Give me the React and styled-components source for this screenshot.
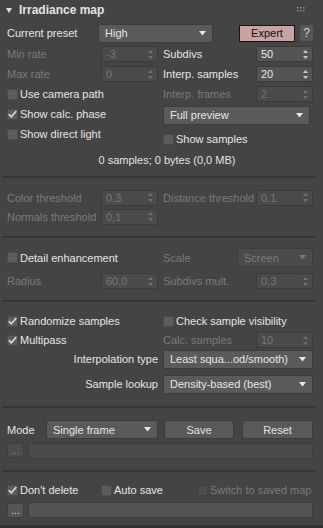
import React from 'react'
import styled, { createGlobalStyle } from 'styled-components'

const Global = createGlobalStyle`
body {
  margin: 0;
  background: #444444;
  font-family: "Liberation Sans", Arial, sans-serif;
  font-size: 11px;
  color: #e2e2e2;
}
`
const Panel = styled.div`
width: 323px;
height: 528px;
background: #444444;
box-sizing: border-box;
border-bottom: 3px solid #333333;
overflow: hidden;
`
const Header = styled.div`
display: flex;
align-items: center;
height: 20px;
padding: 0 18px 0 6px;
gap: 7px;
`
const Title = styled.div`
font-weight: bold;
font-size: 12px;
flex: 1;
`
const Section = styled.div`
padding: ${p => p.pt}px 3px ${p => p.pb}px 5px;
border-bottom: ${p => (p.last ? 'none' : '2px solid #363636')};
margin: 0 7px 0 2px;
`
const Row = styled.div`
display: flex;
align-items: center;
height: ${p => p.h || 20}px;
gap: ${p => p.gap || 0}px;
`
const Cols = styled.div`
display: grid;
grid-template-columns: 151px 150px;
column-gap: 5px;
`
const Col = styled.div`
display: flex;
flex-direction: column;
`
const Half = styled.div`
display: flex;
align-items: center;
justify-content: space-between;
height: ${p => p.h || 20}px;
`
const Label = styled.span`
color: ${p => (p.off ? '#7a7a7a' : '#e4e4e4')};
white-space: nowrap;
text-align: ${p => p.align || 'left'};
flex: ${p => (p.grow ? 1 : 'none')};
width: ${p => (p.w ? p.w + 'px' : 'auto')};
padding-right: ${p => p.pr || 0}px;
`
const Gap = styled.span`
width: ${p => p.w}px;
flex: none;
`
const SpinBox = styled.div`
width: 57px;
height: 16px;
flex: none;
box-sizing: border-box;
border: 1px solid #3b3b3b;
border-radius: 2px;
background: ${p => (p.off ? '#4a4a4a' : '#545454')};
color: ${p => (p.off ? '#767676' : '#e8e8e8')};
display: flex;
align-items: center;
padding: 0 4px;
justify-content: space-between;
`
const Drop = styled.div`
width: ${p => p.w}px;
height: 19px;
flex: none;
box-sizing: border-box;
border: 1px solid #3c3c3c;
border-radius: 2px;
background: ${p => (p.off ? '#4b4b4b' : '#5a5a5a')};
color: ${p => (p.off ? '#7a7a7a' : '#e6e6e6')};
display: flex;
align-items: center;
justify-content: space-between;
padding: 0 6px;
white-space: nowrap;
`
const Box = styled.span`
width: 11px;
height: 11px;
box-sizing: border-box;
background: ${p => (p.off ? '#4c4c4c' : '#5c5c5c')};
border: 1px solid ${p => (p.off ? '#404040' : '#4a4a4a')};
margin-right: 2px;
display: inline-flex;
align-items: center;
justify-content: center;
flex: none;
`
const Check = styled.label`
display: flex;
align-items: center;
color: ${p => (p.off ? '#7a7a7a' : '#e4e4e4')};
white-space: nowrap;
width: ${p => (p.w ? p.w + 'px' : 'auto')};
`
const Expert = styled.div`
width: 56px;
height: 17px;
box-sizing: border-box;
background: #c9a2a2;
border: 1px solid #151515;
color: #111;
display: flex;
align-items: center;
justify-content: center;
`
const Help = styled.div`
width: 13px;
height: 16px;
flex: none;
border-radius: 2px;
background: #575757;
color: #cfcfcf;
font-size: 12px;
display: flex;
align-items: center;
justify-content: center;
`
const Btn = styled.div`
width: ${p => p.w}px;
height: 19px;
flex: none;
box-sizing: border-box;
border: 1px solid #3c3c3c;
border-radius: 3px;
background: #595959;
display: flex;
align-items: center;
justify-content: center;
`
const Dots = styled.div`
width: 17px;
height: 15px;
box-sizing: border-box;
border: 1px solid #3e3e3e;
border-radius: 3px;
background: ${p => (p.off ? '#4c4c4c' : '#565656')};
color: ${p => (p.off ? '#888' : '#dcdcdc')};
display: flex;
align-items: flex-end;
justify-content: center;
font-size: 10px;
line-height: 12px;
flex: none;
`
const Field = styled.div`
flex: 1;
height: 16px;
box-sizing: border-box;
border: 1px solid #3d3d3d;
border-radius: 2px;
background: ${p => (p.off ? '#4b4b4b' : '#545454')};
`
const Stats = styled.div`
text-align: center;
height: 16px;
line-height: 16px;
padding-left: 14px;
`

const Arrow = ({ off }) => (
  <svg width="7" height="5" viewBox="0 0 7 5">
    <path d="M0 0 H7 L3.5 4.5 Z" fill={off ? '#7a7a7a' : '#e8e8e8'} />
  </svg>
)

const Updown = ({ off }) => (
  <svg width="5" height="9" viewBox="0 0 5 9">
    <path d="M2.5 0 L5 3 H0 Z M0 6 H5 L2.5 9 Z" fill={off ? '#707070' : '#c8c8c8'} />
  </svg>
)

const Tick = () => (
  <svg width="9" height="8" viewBox="0 0 9 8">
    <path d="M0.8 4.2 L3.3 6.8 L8.3 1" stroke="#d6d6d6" strokeWidth="1.7" fill="none" />
  </svg>
)

const Spinner = ({ value, off }) => (
  <SpinBox off={off}>
    <span>{value}</span>
    <Updown off={off} />
  </SpinBox>
)

const Dropdown = ({ w, children, off }) => (
  <Drop w={w} off={off}>
    <span>{children}</span>
    <Arrow off={off} />
  </Drop>
)

const CheckBox = ({ on, off, w, children }) => (
  <Check off={off} w={w}>
    <Box off={off}>{on && <Tick />}</Box>
    {children}
  </Check>
)

const Grip = () => (
  <svg width="8" height="6" viewBox="0 0 8 6">
    {[0, 3, 6].map(x => [0, 3].map(y => <rect key={x + '-' + y} x={x} y={y} width="1.5" height="1.5" fill="#8a8a8a" />))}
  </svg>
)

const LabelSpin = ({ label, value, off, h }) => (
  <Half h={h}>
    <Label off={off}>{label}</Label>
    <Spinner value={value} off={off} />
  </Half>
)

export default function App() {
  return (
    <Panel>
      <Global />
      <Header>
        <svg width="6" height="5" viewBox="0 0 6 5"><path d="M0 0 H6 L3 5 Z" fill="#dedede" /></svg>
        <Title>Irradiance map</Title>
        <Grip />
      </Header>

      <Section pt={2} pb={8}>
        <Row h={22}>
          <Label w={91}>Current preset</Label>
          <Dropdown w={115}>High</Dropdown>
          <Gap w={26} />
          <Expert>Expert</Expert>
          <Gap w={5} />
          <Help>?</Help>
        </Row>
        <Cols>
          <Col>
            <LabelSpin label="Min rate" value="-3" off />
            <LabelSpin label="Max rate" value="0" off />
            <Half><CheckBox>Use camera path</CheckBox></Half>
          </Col>
          <Col>
            <LabelSpin label="Subdivs" value="50" />
            <LabelSpin label="Interp. samples" value="20" />
            <LabelSpin label="Interp. frames" value="2" off />
          </Col>
        </Cols>
        <Cols>
          <Col>
            <Half><CheckBox on>Show calc. phase</CheckBox></Half>
            <Half><CheckBox>Show direct light</CheckBox></Half>
          </Col>
          <Col>
            <Half h={22}><Dropdown w={147}>Full preview</Dropdown></Half>
            <Half h={26}><CheckBox>Show samples</CheckBox></Half>
          </Col>
        </Cols>
        <Stats>0 samples; 0 bytes (0,0 MB)</Stats>
      </Section>

      <Section pt={10} pb={10}>
        <Cols>
          <Col>
            <LabelSpin label="Color threshold" value="0,3" off h={19} />
            <LabelSpin label="Normals threshold" value="0,1" off h={19} />
          </Col>
          <Col>
            <LabelSpin label="Distance threshold" value="0,1" off h={19} />
          </Col>
        </Cols>
      </Section>

      <Section pt={9} pb={6}>
        <Cols>
          <Col>
            <Half h={21}><CheckBox>Detail enhancement</CheckBox></Half>
            <LabelSpin label="Radius" value="60,0" off h={26} />
          </Col>
          <Col>
            <Half h={21}>
              <Label off>Scale</Label>
              <Dropdown w={76} off>Screen</Dropdown>
            </Half>
            <LabelSpin label="Subdivs mult." value="0,3" off h={26} />
          </Col>
        </Cols>
      </Section>

      <Section pt={9} pb={7}>
        <Cols>
          <Col>
            <Half><CheckBox on>Randomize samples</CheckBox></Half>
            <Half h={18}><CheckBox on>Multipass</CheckBox></Half>
          </Col>
          <Col>
            <Half><CheckBox>Check sample visibility</CheckBox></Half>
            <LabelSpin label="Calc. samples" value="10" off h={18} />
          </Col>
        </Cols>
        <Row h={20}>
          <Label grow align="right" pr={5}>Interpolation type</Label>
          <Dropdown w={150}>Least squa...od/smooth)</Dropdown>
        </Row>
        <Row h={30}>
          <Label grow align="right" pr={5}>Sample lookup</Label>
          <Dropdown w={150}>Density-based (best)</Dropdown>
        </Row>
      </Section>

      <Section pt={11} pb={9}>
        <Row h={21}>
          <Label w={39}>Mode</Label>
          <Dropdown w={112}>Single frame</Dropdown>
          <Gap w={6} />
          <Btn w={70}>Save</Btn>
          <Gap w={8} />
          <Btn w={71}>Reset</Btn>
        </Row>
        <Row h={21} gap={4}>
          <Dots off>...</Dots>
          <Field off />
        </Row>
      </Section>

      <Section pt={9} pb={0} last>
        <Row h={18}>
          <CheckBox on w={94}>Don't delete</CheckBox>
          <CheckBox w={96}>Auto save</CheckBox>
          <CheckBox off>Switch to saved map</CheckBox>
        </Row>
        <Row h={22} gap={4}>
          <Dots>...</Dots>
          <Field />
        </Row>
      </Section>
    </Panel>
  )
}
